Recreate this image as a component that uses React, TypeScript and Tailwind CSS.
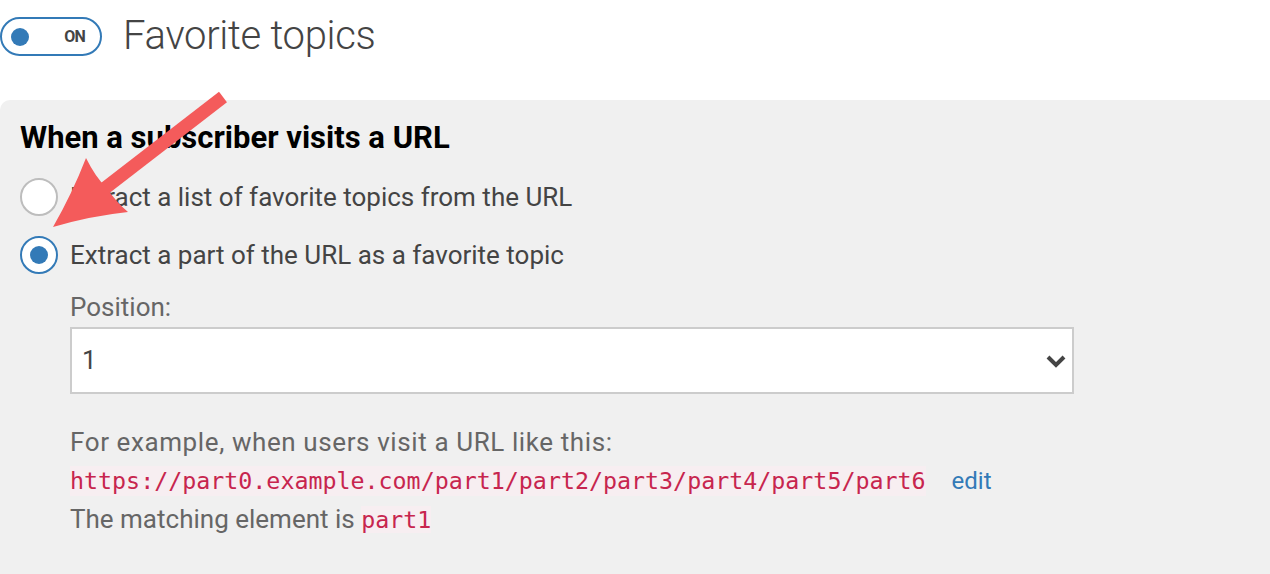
import React from "react";

export default function App() {
  return (
    <div className="relative w-[1270px] h-[574px] overflow-hidden bg-white" style={{ fontFamily: "Roboto, 'Liberation Sans', sans-serif" }}>
      <div className="h-[100px] flex items-start pt-[17px] gap-[21px]">
        <div className="w-[102px] h-[39px] rounded-full border-2 border-[#337ab7] flex items-center justify-between pl-[9px] pr-[15px] bg-white">
          <div className="w-[18px] h-[18px] rounded-full bg-[#337ab7]" />
          <span className="text-[16px] font-bold text-[#444] tracking-[-0.8px]">ON</span>
        </div>
        <h1 className="text-[40px] leading-[40px] font-light text-[#444] mt-[-1px] tracking-[-0.3px]">Favorite topics</h1>
      </div>
      <div className="bg-[#f0f0f0] rounded-tl-[10px] h-[474px] pl-[20px] pt-[19px]">
        <h2 className="text-[31px] leading-[38px] font-bold text-black">When a subscriber visits a URL</h2>
        <div className="mt-[20px] flex items-center gap-[12px] h-[40px]">
          <div className="w-[38px] h-[38px] rounded-full bg-white border-2 border-[#bdbdbd]" />
          <span className="text-[26px] text-[#444]">Extract a list of favorite topics from the URL</span>
        </div>
        <div className="mt-[18px] flex items-center gap-[12px] h-[40px]">
          <div className="w-[38px] h-[38px] rounded-full bg-white border-2 border-[#337ab7] flex items-center justify-center">
            <div className="w-[18px] h-[18px] rounded-full bg-[#337ab7]" />
          </div>
          <span className="text-[26px] text-[#444]">Extract a part of the URL as a favorite topic</span>
        </div>
        <div className="pl-[50px]">
          <div className="mt-[17px] text-[26px] leading-[30px] text-[#666]">Position:</div>
          <div className="mt-[5px] w-[1004px] h-[67px] bg-white border-2 border-[#cccccc] flex items-center justify-between pl-[10px] pr-[6px]">
            <span className="text-[26px] text-[#444]">1</span>
            <svg width="20" height="14" viewBox="0 0 20 14">
              <path d="M2 3 L10 11 L18 3" fill="none" stroke="#444" strokeWidth="4" />
            </svg>
          </div>
          <div className="mt-[29px] text-[26px] leading-[38.5px] text-[#666]">
            <div className="tracking-[0.6px]">For example, when users visit a URL like this:</div>
            <div className="flex items-center">
              <code className="bg-[#f7eef1] text-[#c7254e] text-[23.3px] px-0 leading-[30px]" style={{ fontFamily: "'DejaVu Sans Mono', monospace" }}>
                https://part0.example.com/part1/part2/part3/part4/part5/part6
              </code>
              <span className="ml-[26px] text-[24px] text-[#337ab7]">edit</span>
            </div>
            <div>
              The matching element is{" "}
              <code className="bg-[#f7eef1] text-[#c7254e] text-[23.3px] leading-[30px]" style={{ fontFamily: "'DejaVu Sans Mono', monospace" }}>part1</code>
            </div>
          </div>
        </div>
      </div>
      <svg className="absolute left-0 top-0 pointer-events-none" width="300" height="300" viewBox="0 0 300 300">
        <line x1="223" y1="97" x2="100" y2="192" stroke="#f45b5b" strokeWidth="13" strokeLinecap="butt" />
        <path d="M53 227 Q72 194 86 158 Q96 178 106 187 Q116 202 128 212 Q90 216 53 227 Z" fill="#f45b5b" />
      </svg>
    </div>
  );
}
